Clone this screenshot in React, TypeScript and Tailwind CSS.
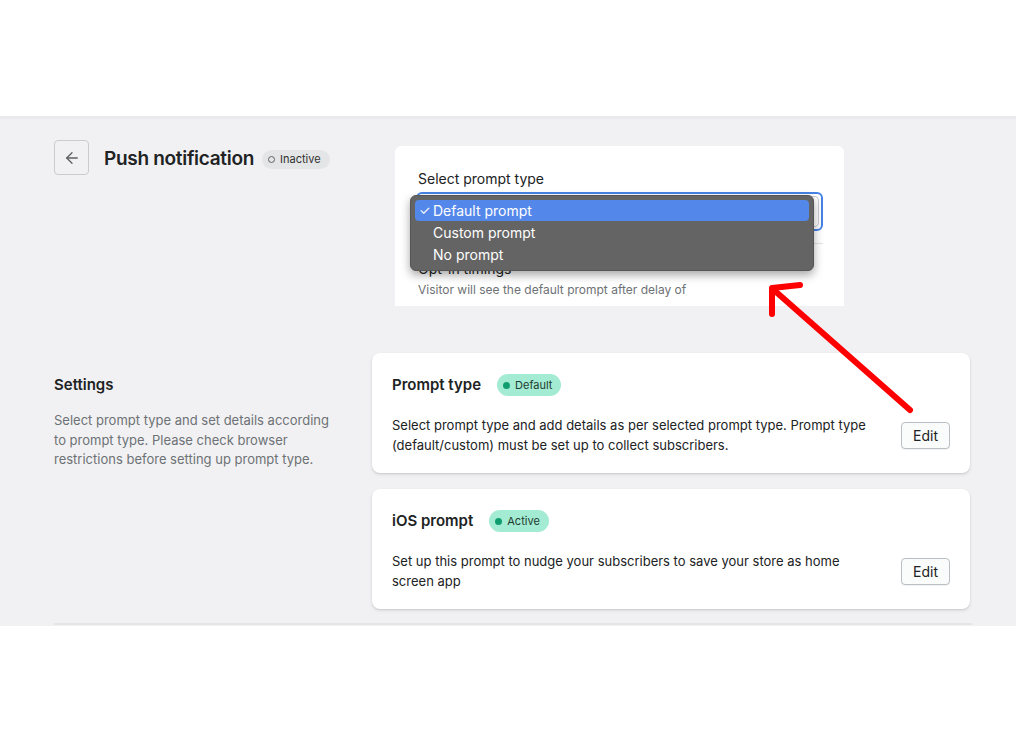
import { ArrowLeft } from 'lucide-react';

const font = { fontFamily: 'Inter, "Noto Sans", sans-serif' };

const StatusBadge = ({ label, tone }: { label: string; tone: 'inactive' | 'success' }) => {
  if (tone === 'inactive') {
    return (
      <span className="inline-flex items-center gap-[5px] h-[19px] pl-[6px] pr-[9px] rounded-full bg-[#e4e5e7] text-[11px] text-[#303030]">
        <span className="w-[7px] h-[7px] rounded-full border-[1.5px] border-[#616161]" />
        {label}
      </span>
    );
  }
  return (
    <span className="inline-flex items-center gap-[5px] h-[22px] pl-[6px] pr-[9px] rounded-full bg-[#a4ebd3] text-[11px] text-[#1d3b31]">
      <span className="w-[7px] h-[7px] rounded-full bg-[#0f9d6f]" />
      {label}
    </span>
  );
};

const SettingCard = ({
  title,
  badge,
  text,
}: {
  title: string;
  badge: string;
  text: string;
}) => (
  <div className="bg-white rounded-lg shadow-[0_1px_2px_rgba(0,0,0,0.12),0_2px_4px_rgba(0,0,0,0.06)] px-5 pt-[21px] pb-[18px]">
    <div className="flex items-center gap-4 h-[22px]">
      <h3 className="text-[15px] font-semibold text-[#202223]">{title}</h3>
      <StatusBadge label={badge} tone="success" />
    </div>
    <div className="flex items-center justify-between gap-8 mt-[20px]">
      <p className="text-[13px] leading-[19.5px] text-[#202223] max-w-[490px]">{text}</p>
      <button className="shrink-0 w-[49px] h-[27px] rounded-[4px] border border-[#babfc3] bg-[#fafbfb] text-[14px] text-[#202223] shadow-[0_1px_0_rgba(0,0,0,0.05)]">
        Edit
      </button>
    </div>
  </div>
);

export default function App() {
  return (
    <div className="relative w-[1016px] h-[743px] bg-white overflow-hidden" style={font}>
      <div className="h-[116px] bg-white" />

      <div className="h-[510px] bg-[#f1f1f3] border-t-[3px] border-[#eaeaec] overflow-hidden">
        {/* Header + inset screenshot */}
        <div className="flex items-start pl-[54px] pt-[21px]">
          <div className="w-[341px] flex items-center gap-[15px]">
            <button className="w-[35px] h-[35px] rounded-[4px] border border-[#c9cccf] flex items-center justify-center">
              <ArrowLeft className="w-[18px] h-[18px] text-[#5c5f62]" strokeWidth={1.75} />
            </button>
            <div className="flex items-center gap-2 pt-[4px]">
              <h1 className="text-[19px] font-semibold text-[#202223] tracking-[-0.3px]">Push notification</h1>
              <StatusBadge label="Inactive" tone="inactive" />
            </div>
          </div>

          <div className="relative mt-[6px] w-[449px] h-[160px] bg-white rounded-t-[6px] overflow-hidden">
            <div className="pl-[23px] pr-[21px] pt-6">
              <p className="text-[14px] text-[#202223] leading-[18px]">Select prompt type</p>
              <div className="mt-[4px] h-[39px] rounded-[6px] border-2 border-[#4683e6] p-[2px] -ml-[2px]">
                <div className="h-full rounded-[4px] border border-[#c9cccf]" />
              </div>
              <div className="mt-3 h-px bg-[#e1e3e5]" />
              <p className="mt-4 text-[14px] text-[#202223] leading-[18px]">Opt-in timings</p>
              <p className="mt-[4px] text-[12px] text-[#6d7175] leading-[16px]">
                Visitor will see the default prompt after delay of
              </p>
            </div>

            {/* native select menu */}
            <div className="absolute left-[15px] top-[49px] w-[404px] h-[76px] rounded-[6px] bg-[#646464] border border-[#555] shadow-[0_4px_10px_rgba(0,0,0,0.35)] p-[4px] text-white text-[14px]">
              <div className="h-[21px] rounded-[4px] bg-[#5487ea] flex items-center pl-[4px]">
                <span className="w-[14px] text-[13px]">✓</span>
                <span>Default prompt</span>
              </div>
              <div className="h-[22px] flex items-center pl-[18px]">Custom prompt</div>
              <div className="h-[22px] flex items-center pl-[18px]">No prompt</div>
            </div>
          </div>
        </div>

        {/* Settings */}
        <div className="flex mt-[47px] pl-[54px] pr-[46px]">
          <div className="w-[318px] pt-[22px] pr-6">
            <h2 className="text-[15px] font-semibold text-[#202223] leading-5">Settings</h2>
            <p className="mt-4 text-[13px] leading-[19.5px] text-[#6d7175] w-[285px]">
              Select prompt type and set details according to prompt type. Please check browser
              restrictions before setting up prompt type.
            </p>
          </div>
          <div className="flex-1 flex flex-col gap-4">
            <SettingCard
              title="Prompt type"
              badge="Default"
              text="Select prompt type and add details as per selected prompt type. Prompt type (default/custom) must be set up to collect subscribers."
            />
            <SettingCard
              title="iOS prompt"
              badge="Active"
              text="Set up this prompt to nudge your subscribers to save your store as home screen app"
            />
          </div>
        </div>
        <div className="ml-[54px] mr-[44px] mt-[14px] h-[2px] bg-[#e4e5e7]" />
      </div>

      {/* annotation arrow */}
      <svg className="absolute left-0 top-0 pointer-events-none" width="1016" height="743">
        <line x1="910" y1="410" x2="775" y2="291" stroke="#ff0000" strokeWidth="6" strokeLinecap="round" />
        <polyline
          points="800,285 772,288 772,314"
          fill="none"
          stroke="#ff0000"
          strokeWidth="6"
          strokeLinecap="round"
          strokeLinejoin="round"
        />
      </svg>
    </div>
  );
}
